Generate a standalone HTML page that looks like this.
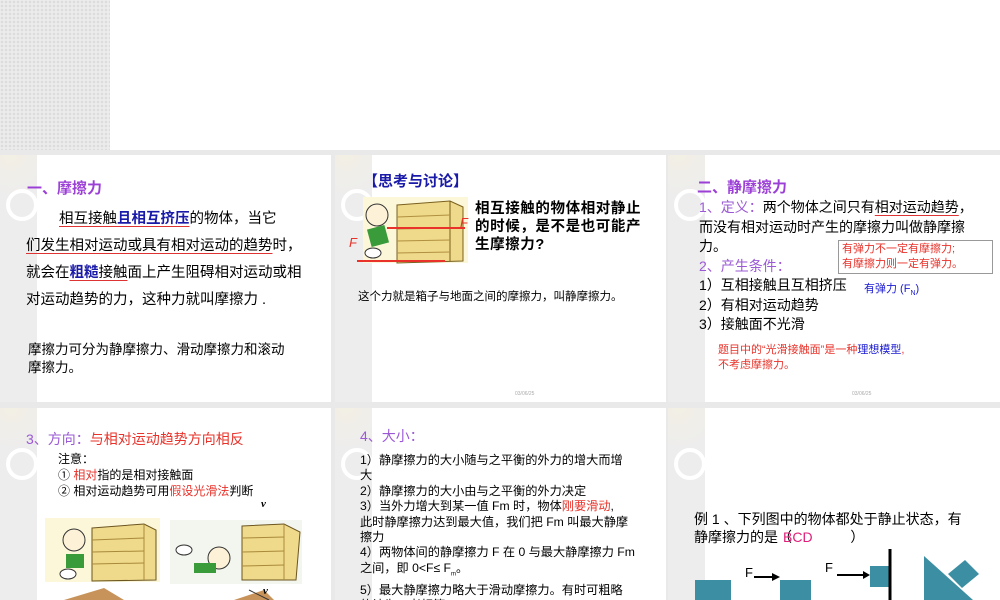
<!DOCTYPE html>
<html><head><meta charset="utf-8"><style>
*{margin:0;padding:0;box-sizing:border-box}
body{width:1000px;height:600px;overflow:hidden;background:#e9e9e9;position:relative;font-family:"Liberation Sans","Noto Sans CJK SC",sans-serif;color:#000}
.strip{position:absolute;background-color:#ececec;background-image:radial-gradient(circle,#dcdcdc 1px,transparent 1.6px);background-size:4px 4px}
.top{position:absolute;left:110px;top:0;width:890px;height:150px;background:#fff}
.s{position:absolute;background:#fff;overflow:hidden;width:331px;height:247px}
.s .l{position:absolute;left:0;top:0;width:37px;height:100%;background:#ededed;background-image:radial-gradient(circle at 30% 0%,#f3efe4 0,#ededed 40px)}
.s .ring{position:absolute;left:6px;top:34px;width:32px;height:32px;border:4px solid #fff;border-radius:50%}
.t{position:absolute;white-space:nowrap}
.p{color:#9b3fd6;font-weight:bold}
.pp{color:#9b59d6}
.b{color:#1a1aa8;font-weight:bold}
.r{color:#e8322a}
.u{text-decoration:underline;text-decoration-color:#d33;text-underline-offset:3px}
.date{position:absolute;font-size:5px;color:#aaa}
</style></head><body>
<div class="strip" style="left:0;top:0;width:110px;height:150px"></div>
<div class="top"></div>

<!-- slide 1 -->
<div class="s" style="left:0;top:155px">
<div class="l"></div><div class="ring"></div>
<div class="t p" style="left:27px;top:22px;font-size:15px">一、摩擦力</div>
<div class="t" style="left:26px;top:51px;font-size:14.5px;line-height:27px">
<span style="padding-left:33px"></span><span class="u">相互接触</span><span class="u b">且相互挤压</span>的物体，当它<br>
<span class="u">们发生相对运动</span><span class="u">或具有相对运动的趋势</span>时，<br>
就会在<span class="u"><span class="b">粗糙</span>接触</span>面上产生阻碍相对运动或相<br>
对运动趋势的力，这种力就叫摩擦力 .</div>
<div class="t" style="left:28px;top:186px;font-size:13.5px;line-height:18px">摩擦力可分为静摩擦力、滑动摩擦力和滚动<br>摩擦力。</div>
</div>

<!-- slide 2 -->
<div class="s" style="left:335px;top:155px">
<div class="l"></div><div class="ring"></div>
<div class="t b" style="left:28px;top:15px;font-size:15px">【思考与讨论】</div>
<svg style="position:absolute;left:20px;top:38px" width="120" height="75">
<rect x="8" y="4" width="105" height="66" fill="#fbf7d8"/>
<polygon points="42,12 95,8 108,14 108,68 42,70" fill="#efd98a" stroke="#7a6020" stroke-width="1"/>
<line x1="95" y1="8" x2="95" y2="68" stroke="#7a6020"/>
<g stroke="#b09040" stroke-width="1"><line x1="42" y1="24" x2="95" y2="22"/><line x1="42" y1="36" x2="95" y2="35"/><line x1="42" y1="48" x2="95" y2="47"/><line x1="42" y1="60" x2="95" y2="59"/></g>
<circle cx="22" cy="22" r="11" fill="#fdf2d8" stroke="#333"/>
<rect x="14" y="34" width="18" height="18" fill="#3a9b3a" transform="rotate(-15 23 43)"/>
<ellipse cx="18" cy="60" rx="8" ry="5" fill="#fff" stroke="#333"/>
<line x1="32" y1="35" x2="110" y2="35" stroke="#e8322a" stroke-width="2"/>
<line x1="2" y1="68" x2="90" y2="68" stroke="#e8322a" stroke-width="2"/>
</svg>
<div class="t r" style="left:125px;top:60px;font-size:13px;font-style:italic">F</div>
<div class="t r" style="left:14px;top:80px;font-size:13px;font-style:italic">F</div>
<div class="t" style="left:140px;top:45px;font-size:14.5px;line-height:18px;font-weight:bold;letter-spacing:.6px">相互接触的物体相对静止<br>的时候，是不是也可能产<br>生摩擦力?</div>
<div class="t" style="left:23px;top:133px;font-size:11.5px">这个力就是箱子与地面之间的摩擦力，叫静摩擦力。</div>
<div class="date" style="left:180px;top:236px">03/06/25</div>
</div>

<!-- slide 3 -->
<div class="s" style="left:668px;top:155px;width:332px">
<div class="l"></div><div class="ring"></div>
<div class="t p" style="left:29px;top:21px;font-size:15px">二、静摩擦力</div>
<div class="t" style="left:31px;top:43px;font-size:14px;line-height:19.5px"><span class="pp">1、定义：</span>两个物体之间只有<span class="u">相对运动趋势</span>，<br>而没有相对运动时产生的摩擦力叫做静摩擦<br>力。<br><span class="pp">2、产生条件：</span><br>1）互相接触且互相挤压<br>2）有相对运动趋势<br>3）接触面不光滑</div>
<div class="t" style="left:196px;top:125px;font-size:11px;color:#1a1ad0">有弹力 (F<sub style="font-size:7px">N</sub>)</div>
<div class="t r" style="left:170px;top:85px;width:155px;height:34px;border:1px solid #999;font-size:11px;line-height:15px;padding:1px 0 0 3px;background:#fff">有弹力不一定有摩擦力;<br>有摩擦力则一定有弹力。</div>
<div class="t r" style="left:50px;top:188px;font-size:11px;line-height:15px">题目中的“光滑接触面”是一种<span style="color:#1a1ad0">理想模型</span>,<br>不考虑摩擦力。</div>
<div class="date" style="left:184px;top:236px">03/06/25</div>
</div>

<!-- slide 4 -->
<div class="s" style="left:0;top:408px;height:192px">
<div class="l"></div><div class="ring" style="top:40px"></div>
<div class="t" style="left:26px;top:21px;font-size:14px"><span class="pp">3、方向：</span><span class="r">与相对运动趋势方向相反</span></div>
<div class="t" style="left:58px;top:43px;font-size:12px;line-height:16px">注意：<br>① <span class="r">相对</span>指的是相对接触面<br>② 相对运动趋势可用<span class="r">假设光滑法</span>判断</div>
<svg style="position:absolute;left:44px;top:100px" width="260" height="92">
<rect x="1" y="10" width="115" height="64" fill="#fbf7d8"/>
<polygon points="48,20 100,16 112,22 112,72 48,73" fill="#efd98a" stroke="#6b5520"/>
<g stroke="#a88a3a"><line x1="48" y1="32" x2="100" y2="30"/><line x1="48" y1="44" x2="100" y2="43"/><line x1="48" y1="56" x2="100" y2="55"/><line x1="100" y1="16" x2="100" y2="72"/></g>
<circle cx="30" cy="32" r="11" fill="#fdf2d8" stroke="#333"/>
<rect x="22" y="46" width="18" height="14" fill="#3a9b3a"/>
<ellipse cx="24" cy="66" rx="8" ry="5" fill="#fff" stroke="#333"/>
<rect x="126" y="12" width="132" height="64" fill="#f3f6ee"/>
<polygon points="198,18 240,16 256,24 252,72 198,72" fill="#efd98a" stroke="#6b5520"/>
<g stroke="#a88a3a"><line x1="198" y1="30" x2="240" y2="29"/><line x1="198" y1="44" x2="240" y2="43"/><line x1="198" y1="58" x2="240" y2="57"/><line x1="240" y1="16" x2="240" y2="72"/></g>
<circle cx="175" cy="50" r="11" fill="#fdf2d8" stroke="#333"/>
<rect x="150" y="55" width="22" height="10" fill="#3a9b3a"/>
<ellipse cx="140" cy="42" rx="8" ry="5" fill="#fff" stroke="#333"/>
<polygon points="20,92 60,80 80,92" fill="#c8935a"/>
<polygon points="190,92 220,82 230,92" fill="#c8935a"/>
<line x1="205" y1="82" x2="225" y2="92" stroke="#333"/>
</svg>
<div class="t" style="left:261px;top:90px;font-size:11px;font-style:italic;font-weight:bold;font-family:'Liberation Serif',serif">v</div>
<div class="t" style="left:263px;top:177px;font-size:11px;font-style:italic;font-weight:bold;font-family:'Liberation Serif',serif">v</div>
</div>

<!-- slide 5 -->
<div class="s" style="left:335px;top:408px;height:192px">
<div class="l"></div><div class="ring" style="top:40px"></div>
<div class="t pp" style="left:25px;top:18px;font-size:14px">4、大小：</div>
<div class="t" style="left:25px;top:45px;font-size:12.2px;line-height:15.4px">1）静摩擦力的大小随与之平衡的外力的增大而增<br>大<br>2）静摩擦力的大小由与之平衡的外力决定<br>3）当外力增大到某一值 Fm 时，物体<span class="r">刚要滑动</span>,<br>此时静摩擦力达到最大值，我们把 Fm  叫最大静摩<br>擦力<br>4）两物体间的静摩擦力 F 在 0 与最大静摩擦力 Fm<br>之间，即 0&lt;F≤ F<sub style="font-size:6px">m</sub>。<br>5）最大静摩擦力略大于滑动摩擦力。有时可粗略<br>的认为二者相等</div>
</div>

<!-- slide 6 -->
<div class="s" style="left:668px;top:408px;width:332px;height:192px">
<div class="l"></div><div class="ring" style="top:40px"></div>
<div class="t" style="left:26px;top:102px;font-size:14px;line-height:18px">例 1 、下列图中的物体都处于静止状态，有<br>静摩擦力的是（ &nbsp; &nbsp; &nbsp; &nbsp; &nbsp; &nbsp; &nbsp; ）</div>
<div class="t" style="left:115px;top:121px;font-size:14px;color:#e0207a">BCD</div>
<svg style="position:absolute;left:0;top:140px" width="332" height="52">
<rect x="27" y="32" width="36" height="30" fill="#3c8fa2"/>
<rect x="112" y="32" width="31" height="30" fill="#3c8fa2"/>
<line x1="86" y1="29" x2="106" y2="29" stroke="#000" stroke-width="2"/><polygon points="112,29 104,25 104,33" fill="#000"/>
<line x1="169" y1="27" x2="196" y2="27" stroke="#000" stroke-width="2"/><polygon points="202,27 195,23 195,31" fill="#000"/>
<rect x="202" y="18" width="19" height="21" fill="#3c8fa2"/>
<line x1="222" y1="1" x2="222" y2="52" stroke="#000" stroke-width="3"/>
<polygon points="256,8 256,52 305,52" fill="#3c8fa2"/>
<polygon points="280,26 297,12 311,26 294,40" fill="#3c8fa2"/>
</svg>
<div class="t" style="left:77px;top:157px;font-size:13px">F</div>
<div class="t" style="left:157px;top:152px;font-size:13px">F</div>
</div>
</body></html>
